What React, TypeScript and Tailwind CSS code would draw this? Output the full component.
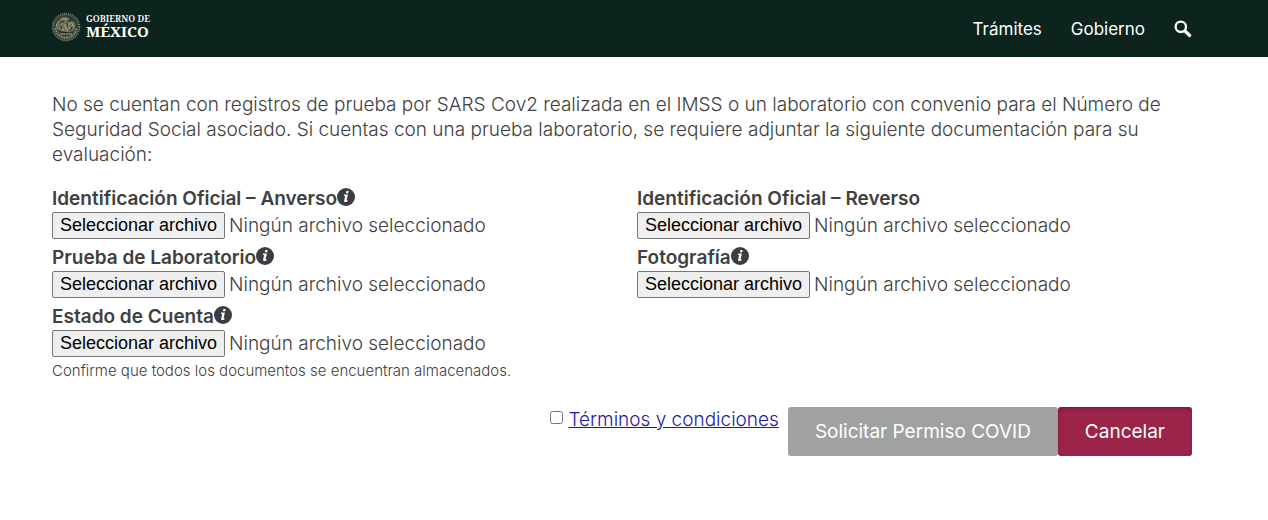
import { useId, useRef, useState } from "react";
import type { ReactNode } from "react";

function Emblem() {
  return (
    <svg viewBox="0 0 30 30" className="size-[30px] shrink-0" fill="none" aria-hidden="true">
      <circle cx="15" cy="15" r="13.3" stroke="#77765f" strokeWidth="1.8" strokeDasharray="1.3 0.7" />
      <circle cx="15" cy="15" r="12" fill="#2e3b31" stroke="#5d6350" strokeWidth="0.7" />
      <path d="M4.500 16c1 6 5 9.500 10.500 9.500s9.500-3.500 10.500-9.500" stroke="#8d8a6c" strokeWidth="2" strokeDasharray="1.800 0.800" />
      <path d="M8 8c2-3 7-4 10-2 1 1 1 2 0 2.500l-2-.5c0 2 3 2 6 1 2 1 3 4 2 7-1 3-3 4-5 4l-3 2-1-2c-4 0-8-2-8-6 0-2 0-4 1-6z" fill="#6f705a" />
      <path d="M8 9c-3 2-3 6 0 9M11 11c-1 3 0 6 2 8M14 12c0 3 1 5 3 7M18 11c-1 2 0 5 1 6M11 6.500l5 1M20 10l3 5M9 22h12M6 12l-1 3" stroke="#b5b08e" strokeWidth="0.9" />
      <path d="M10 13l1 4M16 11l1 4M21 15l-2 4M13 9l-4 2M12 20l6 1" stroke="#0c231e" strokeWidth="0.9" />
    </svg>
  );
}

function SearchIcon() {
  return (
    <svg viewBox="0 0 18 18" className="size-[18px]" fill="none" stroke="currentColor" aria-hidden="true">
      <circle cx="6.800" cy="6.800" r="5.200" strokeWidth="2.300" />
      <path d="M11 11l4.700 4.500" strokeWidth="3.200" strokeLinecap="round" />
    </svg>
  );
}

function InfoIcon() {
  return (
    <svg viewBox="0 0 18 18" className="size-[18px]" aria-hidden="true">
      <circle cx="9" cy="9" r="9" fill="#3b3d42" />
      <path d="M9.400 3h2.300l-.5 2.300H8.900zM7.200 6.600h3.700l-1.300 5.600h1.100l-.3 1.200c-1 .8-3.600 1.200-3.300-.7l1.100-4.800H6.900z" fill="#fff" />
    </svg>
  );
}

function FileField({ label, info = false, children }: { label: string; info?: boolean; children?: ReactNode }) {
  const id = useId();
  const input = useRef<HTMLInputElement>(null);
  const [name, setName] = useState("Ningún archivo seleccionado");
  return (
    <div>
      <div className="flex h-[25px] items-start">
        <label htmlFor={id} className="font-semibold">{label}</label>
        {info && <span className="pt-0.5"><InfoIcon /></span>}
      </div>
      <div className="flex items-center gap-1 py-px">
        <input ref={input} id={id} type="file" className="hidden" onChange={(e) => setName(e.target.files?.[0]?.name ?? name)} />
        <button type="button" onClick={() => input.current?.click()} className="h-[27px] shrink-0 rounded-xs border border-[#767676] bg-[#efefef] px-[7px] pb-0.5 font-['Liberation_Sans',sans-serif] text-lg leading-6 text-black">
          Seleccionar archivo
        </button>
        <span>{name}</span>
      </div>
      {children}
    </div>
  );
}

export default function App() {
  return (
    <div className="bg-white font-['Inter',sans-serif] text-[19px] leading-[25px] font-light text-[#404041]">
      <header className="flex h-[57px] items-center justify-between bg-[#0c231e] pr-[76px] pl-[51px] text-white">
        <a href="#inicio" className="mb-1 flex items-center gap-[5px] font-['Noto_Serif','Liberation_Serif',serif]">
          <Emblem />
          <span className="flex flex-col">
            <span className="text-[9px] leading-[10px] font-semibold">GOBIERNO DE</span>
            <span className="text-[15px] leading-[15px] font-bold">MÉXICO</span>
          </span>
        </a>
        <nav className="flex items-center gap-[29px] text-[17px] font-normal">
          <a href="#tramites" className="pt-0.5">Trámites</a>
          <a href="#gobierno" className="pt-0.5">Gobierno</a>
          <button type="button" aria-label="Buscar"><SearchIcon /></button>
        </nav>
      </header>
      <main className="pt-[35px] pr-[76px] pb-16 pl-[52px]">
        <p>
          No se cuentan con registros de prueba por SARS Cov2 realizada en el IMSS o un laboratorio con convenio para el Número de Seguridad Social asociado. Si cuentas con una prueba laboratorio, se requiere adjuntar la siguiente documentación para su evaluación:
        </p>
        <form onSubmit={(e) => e.preventDefault()}>
          <div className="mt-[19px] grid grid-cols-2 gap-x-[30px] gap-y-[5px]">
            <FileField label="Identificación Oficial – Anverso" info />
            <FileField label="Identificación Oficial – Reverso" />
            <FileField label="Prueba de Laboratorio" info />
            <FileField label="Fotografía" info />
            <FileField label="Estado de Cuenta" info>
              <p className="text-[15px] leading-[25px]">Confirme que todos los documentos se encuentran almacenados.</p>
            </FileField>
          </div>
          <div className="mt-6 flex items-start justify-end">
            <input id="terminos" type="checkbox" aria-label="Aceptar términos y condiciones" className="mt-1 mr-[5px] size-[13px]" />
            <a href="#terminos" className="mr-[9px] text-[#1a1aa6] underline">Términos y condiciones</a>
            <button type="submit" className="h-[49px] rounded-[3px] bg-[#a0a2a1] px-[27px] font-normal text-white">Solicitar Permiso COVID</button>
            <button type="button" className="h-[49px] rounded-[3px] bg-[#9d2449] px-[27px] font-normal text-white shadow-[inset_0_2px_5px_rgba(0,0,0,0.2)]">Cancelar</button>
          </div>
        </form>
      </main>
    </div>
  );
}
